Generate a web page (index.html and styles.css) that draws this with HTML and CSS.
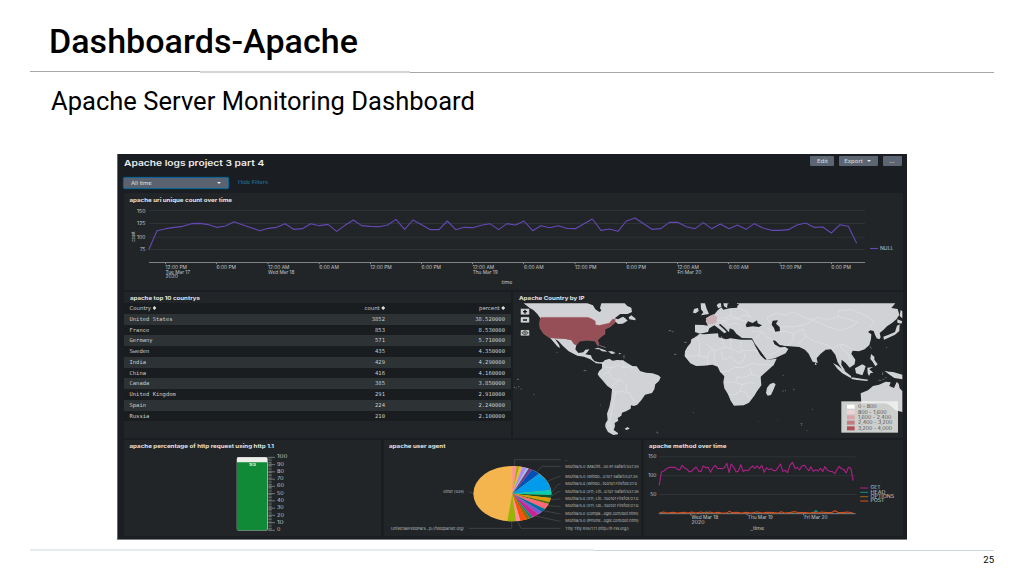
FILE: index.html
```html
<!DOCTYPE html>
<html lang="en">
<head>
<meta charset="utf-8">
<title>Dashboards-Apache</title>
<link rel="stylesheet" href="styles.css">
<script src="labels.js" defer></script>
</head>
<body>
<main class="slide">
<h1 class="slide-title">Dashboards-Apache</h1>
<div class="rule rule-top"><i></i><i></i><i></i></div>
<h2 class="slide-subtitle">Apache Server Monitoring Dashboard</h2>
<section class="dashboard">
<header class="topbar">
<h3 class="board-title">Apache logs project 3 part 4</h3>
<div class="actions">
<button class="btn btn-edit"><span>Edit</span></button>
<button class="btn btn-export"><span>Export</span><i class="caret"></i></button>
<button class="btn btn-more"><span>...</span></button>
</div>
</header>
<div class="filters">
<div class="select"><span>All time</span><i class="caret"></i></div>
<a class="hide">Hide Filters</a>
</div>

<article class="panel">
<svg class="chart" viewBox="124 193 779 97">
<text class="ttl" x="129.5" y="202" textLength="102.5">apache uri unique count over time</text>
<path class="grid" d="M149 210.5H865M149 223.5H865M149 237.2H865M149 249.5H865"/>
<path class="axis" d="M149 262.5H865M165.5 262v2.2M216.5 262v2.2M268 262v2.2M319.3 262v2.2M370.5 262v2.2M421.5 262v2.2M472.5 262v2.2M523.5 262v2.2M575 262v2.2M626.5 262v2.2M677.5 262v2.2M728.5 262v2.2M780 262v2.2M831.5 262v2.2"/>
<g class="lbl">
<text x="137" y="212.6" textLength="8.5">150</text><text x="137" y="225.3" textLength="8.5">125</text><text x="137" y="238.6" textLength="8.5">100</text><text x="140" y="251.4" textLength="5.5">75</text>
<text transform="translate(135 241.5) rotate(-90)" textLength="10">count</text>
<text x="165.5" y="268.9" textLength="21.5">12:00 PM</text><text x="165.5" y="273.6" textLength="24.5">Tue Mar 17</text><text x="165.5" y="278.2" textLength="12.5">2020</text>
<text x="216.5" y="268.9" textLength="19.5">6:00 PM</text>
<text x="268" y="268.9" textLength="21.5">12:00 AM</text><text x="268" y="273.6" textLength="26.5">Wed Mar 18</text>
<text x="319.3" y="268.9" textLength="19.5">6:00 AM</text><text x="370.3" y="268.9" textLength="21.5">12:00 PM</text><text x="421.5" y="268.9" textLength="19.5">6:00 PM</text>
<text x="472.7" y="268.9" textLength="21.5">12:00 AM</text><text x="472.7" y="273.6" textLength="25">Thu Mar 19</text>
<text x="524" y="268.9" textLength="19.5">6:00 AM</text><text x="575" y="268.9" textLength="21.5">12:00 PM</text><text x="626.4" y="268.9" textLength="19.5">6:00 PM</text>
<text x="677.5" y="268.9" textLength="21.5">12:00 AM</text><text x="677.5" y="273.6" textLength="24">Fri Mar 20</text>
<text x="729" y="268.9" textLength="19.5">6:00 AM</text><text x="780" y="268.9" textLength="21.5">12:00 PM</text><text x="831.3" y="268.9" textLength="19.5">6:00 PM</text>
<text x="501.5" y="284.3" textLength="11">time</text><text x="880" y="250.2" textLength="13.5">NULL</text>
</g>
<path class="count-line" d="M870 248.5H878"/>
<polyline class="count-line" transform="translate(110 150) scale(.33333)" points="116,299 141,242 167,236 193,232 218,229 244,221 270,220 296,224 320,232 346,228 372,215 397,224 423,233 449,242 475,235 500,232 525,221 551,238 577,236 602,221 628,227 654,223 680,244 705,226 730,210 755,227 781,229 807,230 833,225 858,208 884,238 909,210 935,224 961,239 987,239 1012,213 1037,239 1063,232 1088,233 1114,226 1140,221 1166,239 1191,221 1217,225 1242,213 1268,242 1293,227 1319,233 1345,227 1370,235 1396,236 1422,221 1447,207 1473,241 1498,237 1524,244 1549,213 1575,204 1602,222 1626,238 1652,236 1678,217 1703,217 1729,230 1755,236 1780,218 1805,236 1831,222 1857,236 1882,225 1908,238 1933,221 1959,234 1984,241 2010,241 2035,239 2061,225 2087,219 2112,232 2138,231 2164,249 2190,224 2215,229 2240,280"/>
</svg>
</article>

<div class="row row-mid">
<article class="panel table-panel">
<h4 class="panel-title"><span>apache top 10 countrys</span></h4>
<table class="countries">
<thead><tr><th>Country <i class="sort"></i></th><th>count <i class="sort"></i></th><th>percent <i class="sort"></i></th></tr></thead>
<tbody>
<tr><td>United States</td><td>3852</td><td>38.520000</td></tr>
<tr><td>France</td><td>853</td><td>8.530000</td></tr>
<tr><td>Germany</td><td>571</td><td>5.710000</td></tr>
<tr><td>Sweden</td><td>435</td><td>4.350000</td></tr>
<tr><td>India</td><td>429</td><td>4.290000</td></tr>
<tr><td>China</td><td>416</td><td>4.160000</td></tr>
<tr><td>Canada</td><td>385</td><td>3.850000</td></tr>
<tr><td>United Kingdom</td><td>291</td><td>2.910000</td></tr>
<tr><td>Spain</td><td>224</td><td>2.240000</td></tr>
<tr><td>Russia</td><td>210</td><td>2.100000</td></tr>
</tbody>
</table>
</article>
<article class="panel">
<svg class="chart" viewBox="513 292 390 146">
<text class="ttl" x="519" y="299.6" textLength="65.5">Apache Country by IP</text>
<g transform="translate(512 288) scale(.33333)">
<g class="land">
<path d="M35 46H226L243 52 250 64 262 72 268 68 264 60 268 46H338L346 54 358 59 360 72 347 78 325 78 308 91 318 94 333 86 340 91 347 98 332 107 318 108 311 101 292 107 266 118 250 112 228 92H86L76 78 64 66 53 60Z"/>
<path d="M350 88 358 82 371 92 370 97 352 94ZM114 149 158 152 166 154 178 156 186 168 193 171 190 184 199 195 214 193 220 185 232 184 226 193 220 199 237 202 240 211 248 220 262 223 273 222 271 227 252 226 235 214 216 206 196 203 170 190 152 173 139 159 129 153 141 170 144 180 137 176Z"/>
<path d="M246 183 258 179 280 187 286 191 270 190 262 184ZM288 190 301 190 311 196 299 198ZM320 195 329 197 321 199ZM338 422 347 417 353 422 343 426ZM322 78 328 73 340 73 338 78Z"/>
<path d="M270 226 278 217 292 212 302 218 315 216 333 217 346 225 362 235 374 235 384 249 402 254 421 256 439 262 446 268 441 279 430 289 427 304 420 315 399 320 389 335 376 350 366 354 357 352 356 362 342 370 330 374 328 383 317 390 319 398 308 405 309 415 305 426 318 435 318 439 304 441 288 432 280 417 280 408 287 395 285 377 292 357 297 333 300 304 286 294 274 280 262 266 257 259 261 250 270 241Z"/>
<path d="M518 205 519 190 526 177 536 165 538 154 552 146 562 138 577 139 618 136 620 148 642 154 656 151 687 155 720 155 729 171 743 195 757 211 762 216 794 212 785 231 766 248 746 266 748 292 734 311 728 322 711 344 695 352 666 353 656 338 648 319 637 301 634 283 637 265 624 251 617 236 601 230 575 233 552 234 535 226Z"/>
<path d="M549 110 574 111 588 113 581 99 594 86 608 78 617 67 628 58 634 65 653 61 676 59 675 46H1150L1138 60 1157 63 1162 80 1154 93 1140 105 1125 115 1114 126 1103 135 1106 148 1102 154 1094 151 1089 140 1085 129 1075 127 1068 132 1078 139 1077 153 1072 171 1058 184 1041 190 1022 188 1018 197 1030 215 1028 229 1013 239 1001 225 989 215 988 230 1000 249 991 245 977 223 970 200 957 184 941 185 926 197 914 211 917 225 902 221 890 197 879 185 862 177 824 174 802 173 783 157 788 168 805 178 820 177 829 183 821 196 789 211 764 216 749 195 728 166 720 151 690 150 673 137 664 125 653 121 651 133 638 119 624 107 621 111 635 123 644 132 637 136 622 123 607 112 592 121 588 132 564 137 549 132Z"/>
<path d="M566 46H579L584 62 591 78 567 82 574 73 567 64ZM546 63 558 60 560 69 551 76 543 74ZM620 46H627L628 57 619 61 614 52ZM634 46H650L645 60 636 55ZM765 299 774 288 785 284 791 289 784 306 777 321 767 323 762 315ZM911 223 914 230 908 230ZM1114 146 1130 140 1149 132 1155 113 1163 109 1162 129 1149 140 1128 150 1116 155ZM1156 94 1171 100 1168 107 1156 104ZM1166 66 1171 70 1171 91 1163 84ZM963 225 978 233 998 249 1018 265 1016 270 991 256 976 242ZM1019 268 1053 273 1069 275 1065 279 1036 276 1018 273ZM1029 241 1051 229 1061 235 1057 247 1051 262 1032 256ZM1066 239 1083 237 1072 244 1084 254 1076 255 1071 264 1067 256ZM1077 198 1087 206 1087 215 1097 229 1090 235 1082 221 1075 213ZM1117 248 1131 251 1143 252 1171 260 1171 274 1147 270 1134 261ZM1048 346 1046 316 1068 307 1083 294 1101 290 1121 281 1136 283 1132 294 1146 300 1154 282 1160 287 1163 301 1171 309 1171 372 1150 367 1137 354 1122 346Z"/>
</g>
<path class="usa" d="M86 88H228L239 92 250 99 251 110 262 112 292 105 302 93 310 94 309 104 294 117 279 124 279 138 264 149 257 157 261 168 258 175 249 159 224 157 202 160 194 171 186 168 178 156 166 154 158 152 124 151 112 149 95 137 84 121 82 107Z"/>
<path class="france" d="M581 91 592 84 604 79 615 87 614 103 601 109 587 109Z"/>
<path class="sea" d="M701 111 708 100 722 105 735 97 737 106 750 112 741 117 722 115 704 118ZM782 98 798 97 792 107 803 117 804 130 790 132 786 120 779 110ZM725 166 763 213 758 214 745 201 736 185ZM783 157 790 158 803 171 815 173 804 178 788 169ZM647 46 657 50 682 47 673 57 655 59 646 57Z"/>
<path class="borders" d="M272 222 282 238 302 238 319 231 333 239 357 235 374 238M302 238 289 251 273 263M289 251 304 274 325 276 344 293 343 311 353 315 366 342M298 301 311 313 306 332 300 370 292 405 301 430M325 276 306 288 301 300M333 217 333 239M361 235 359 246M311 313 331 309 343 316M551 146 563 163 562 204 521 204M579 166 608 188 638 178 628 145M638 178 656 182 656 151M656 182 687 195 687 155M687 188H738M562 204 586 208 594 188 608 188M586 208 586 232M608 193 606 222 622 235M628 190 634 217 656 207 676 226 693 222 701 195M624 251 648 250 667 238 693 239 721 226M721 226 748 230 785 231M637 283 671 283 675 266 695 269 719 259 713 239M671 283 691 290 710 284 730 286M691 290 684 309 668 320 648 319M684 309 702 313 712 334M719 259 746 266M657 61 657 83 638 91 622 89M657 83 679 91 693 81 720 88M614 96 637 99 651 110 668 105 687 113M624 107 642 96 665 91 701 99M676 59 704 70 712 87M720 130 747 130 760 143 783 157M729 151 749 133M773 202 797 190 820 177M765 120 790 132 819 130 844 137 842 158 826 173M773 106 765 88 794 75 821 82 840 71 881 90 902 96 880 109 852 116 804 117M902 96 920 88 943 97 978 86 1015 96 1037 103 1015 118 984 127 943 115 902 96M978 86 980 69 1018 65 1067 85 1087 102 1072 117M844 137 873 123 881 145 861 167M881 145 906 160 945 170 963 182M963 182 983 168 1005 174 1022 188M983 168 989 183 1005 193 1018 217"/>
<path class="specks" d="M15 274h6M5 298h4M11 300h3M18 296h4M26 303h3M64 319h3M215 248h8M265 351h2M433 432 439 436M470 128h7M479 131h5M516 163h8M486 199h7M544 374h2M812 262h3M811 309h4M819 308h3M843 305h4M866 407h5M869 410v3M884 428h2M900 364h2M739 401h1M797 397h1M1074 175 1078 182M262 172 281 179M305 193h4M336 201v10M133 193h3M1100 277h8M1112 274h5M1120 269h4M1124 180v-3M1112 253v8"/>
<g class="mapbtn"><rect x="25" y="61" width="28" height="20" rx="4"/><rect x="25" y="86" width="28" height="19" rx="4"/><rect x="25" y="125" width="28" height="19" rx="4"/></g>
<path class="mapicon" d="M33 71H45M39 65V77M33 96H45"/>
<ellipse class="ring" cx="39" cy="134.500" rx="8" ry="5.500"/><path class="ring" d="M28 134.500H50M39 127V142"/>
<g class="map-legend"><rect class="legend-bg" x="988" y="340" width="170" height="94"/>
<rect x="1005" y="350" width="23" height="12" fill="#fff"/><rect x="1005" y="366" width="23" height="12" fill="#f0d3d6"/><rect x="1005" y="382" width="23" height="12" fill="#d9a5a9"/><rect x="1005" y="398" width="23" height="12" fill="#c47c81"/><rect x="1005" y="415" width="23" height="12" fill="#b25057"/>
<text x="1038" y="361" textLength="56">0 - 800</text><text x="1038" y="377" textLength="86">800 - 1,600</text><text x="1038" y="393" textLength="100">1,600 - 2,400</text><text x="1038" y="409" textLength="103">2,400 - 3,200</text><text x="1038" y="425" textLength="102">3,200 - 4,000</text></g>
</g>
</svg>
</article>
</div>

<div class="row row-bottom">
<article class="panel">
<svg class="chart" viewBox="124 440 257 96">
<text class="ttl" x="129.500" y="448.300" textLength="144.500">apache percentage of http request using http 1.1</text>
<g transform="translate(115 436) scale(.33333)">
<rect x="365" y="63" width="94" height="221" rx="6" fill="#a2a6a7"/>
<rect x="366" y="64" width="90" height="28" rx="4" fill="#eceee9"/>
<path d="M366 79H456V278Q456 283 451 283H371Q366 283 366 278Z" fill="#118a37"/>
<path class="ticks" d="M460 64h20M460 86h20M460 107.500h20M460 129.500h20M460 151h20M460 173h20M460 194.500h20M460 216.500h20M460 238h20M460 260h20M460 283h20"/>
<path class="minor" d="M465 65V283"/>
<text class="gauge-value" x="402" y="91" textLength="21">93</text>
<g class="big"><text x="486" y="67" textLength="31">100</text><text x="486" y="89" textLength="21">90</text><text x="486" y="110" textLength="21">80</text><text x="486" y="132" textLength="20">70</text><text x="486" y="154" textLength="21">60</text><text x="486" y="176" textLength="20">50</text><text x="486" y="198" textLength="21">40</text><text x="486" y="220" textLength="20">30</text><text x="486" y="242" textLength="21">20</text><text x="486" y="263" textLength="20">10</text><text x="486" y="285" textLength="10">0</text></g>
</g>
</svg>
</article>
<article class="panel">
<svg class="chart" viewBox="384 440 257 96">
<text class="ttl" x="389" y="448.300" textLength="56.500">apache user agent</text>
<g transform="translate(380 436) scale(.33333)">
<path class="leader" d="M403 92V71H542M470 107 486 91H542M502 136 535 122H542M513 171 535 145H542M513 181 535 167H542M510 192 535 189H542M502 209 535 211H542M490 224 535 233H542M467 240 535 255H542M413 255 423 277H542M280 172 266 167M395 256V277H266"/>
<ellipse cx="397" cy="173" rx="117" ry="83" fill="#f4b54f"/>
<path fill="#ff929e" d="M397 173V90A117 83 0 0 1 410 90.500Z"/>
<path fill="#99b407" d="M397 173 410 90.500A117 83 0 0 1 418 91.500Z"/>
<path fill="#f4b54f" d="M397 173 418 91.500A117 83 0 0 1 427 93Z"/>
<path fill="#a98cf5" d="M397 173 427 93A117 83 0 0 1 440 96Z"/>
<path fill="#8cc8ff" d="M397 173 440 96A117 83 0 0 1 446 97.500Z"/>
<path fill="#74398e" d="M397 173 446 97.500A117 83 0 0 1 456 101.500Z"/>
<path fill="#0051b5" d="M397 173 456 101.500A117 83 0 0 1 477 113Z"/>
<path fill="#009ceb" d="M397 173 477 113A117 83 0 0 1 513 163Z"/>
<path fill="#00cdaf" d="M397 173 513 163A117 83 0 0 1 514 177Z"/>
<path fill="#07562f" d="M397 173 514 177A117 83 0 0 1 512 186Z"/>
<path fill="#dd9900" d="M397 173 512 186A117 83 0 0 1 508 198Z"/>
<path fill="#4d6b13" d="M397 173 508 198A117 83 0 0 1 505 204Z"/>
<path fill="#ff677b" d="M397 173 505 204A117 83 0 0 1 495 219Z"/>
<path fill="#006fa4" d="M397 173 495 219A117 83 0 0 1 485 228Z"/>
<path fill="#7556d9" d="M397 173 485 228A117 83 0 0 1 475 235Z"/>
<path fill="#cb2196" d="M397 173 475 235A117 83 0 0 1 458 243.500Z"/>
<path fill="#008c80" d="M397 173 458 243.500A117 83 0 0 1 450 247Z"/>
<path fill="#99650c" d="M397 173 450 247A117 83 0 0 1 439 250.500Z"/>
<path fill="#fb4f0b" d="M397 173 439 250.500A117 83 0 0 1 421 254.500Z"/>
<path fill="#ff929e" d="M397 173 421 254.500A117 83 0 0 1 408 255.500Z"/>
<path fill="#99b407" d="M397 173 408 255.500A117 83 0 0 1 382 255.500Z"/>
<g class="agent"><text x="556" y="75" textLength="5">..</text><text x="556" y="95" textLength="220">Mozilla/5.0 (Macint...50.91 Safari/537.36</text><text x="556" y="126" textLength="217">Mozilla/5.0 (Windo...0.107 Safari/537.36</text><text x="556" y="148" textLength="215">Mozilla/5.0 (Windo...100101 Firefox/27.0</text><text x="556" y="170" textLength="220">Mozilla/5.0 (X11; Lin...0.107 Safari/537.36</text><text x="556" y="192" textLength="219">Mozilla/5.0 (X11; Lin...100101 Firefox/27.0</text><text x="556" y="214" textLength="219">Mozilla/5.0 (X11; Ub...100101 Firefox/27.0</text><text x="556" y="236" textLength="219">Mozilla/5.0 (compa...ogle.com/bot.html)</text><text x="556" y="258" textLength="220">Mozilla/5.0 (iPhone...ogle.com/bot.html)</text><text x="556" y="281" textLength="191">Tiny Tiny RSS/1.11 (http://tt-rss.org/)</text><text x="190" y="171" textLength="62">other (536)</text><text x="33" y="281" textLength="219">UniversalFeedPars...p://feedparser.org/</text></g>
</g>
</svg>
</article>
<article class="panel">
<svg class="chart" viewBox="643.500 440 259 96">
<text class="ttl" x="648.500" y="448.300" textLength="77.500">apache method over time</text>
<path class="grid" d="M658.500 456.800H855M658.500 475.700H855M658.500 494.500H855"/>
<g transform="translate(640 436) scale(.33333)">
<path class="axis" d="M55 233H645M151 233v5M320 233v5M489 233v5"/>
<polyline class="series" stroke="#ad2088" points="56,148 63,108 70,105 78,98 86,94 104,94 112,101 118,101 125,88 133,97 140,100 146,107 152,107 160,99 167,93 175,106 182,106 188,90 196,95 203,94 210,109 217,96 224,88 231,97 246,98 253,94 259,82 266,110 272,84 280,94 287,108 294,105 301,86 308,107 315,102 323,104 329,96 337,90 342,97 350,90 357,98 364,88 371,109 378,95 385,101 392,98 399,104 406,104 420,84 427,106 434,103 441,110 448,88 456,79 464,98 470,94 477,102 484,90 492,88 498,96 505,104 511,92 518,106 526,101 533,105 540,97 547,107 553,92 561,103 568,106 576,107 583,113 590,100 596,91 604,99 610,100 617,111 624,94 631,97 638,134"/>
<path class="series" stroke="#13877f" d="M190 231 197 228 204 231M519 231 526 223 534 230"/>
<polyline class="series" stroke="#d64d16" points="56,231 69,228 80,231 98,229 111,231 130,229 143,231 153,228 166,231 181,228 193,231 208,228 220,231 232,229 244,231 259,231 266,226 275,230 288,229 304,231 317,229 331,231 350,228 366,231 380,229 397,230 414,231 422,227 433,231 451,229 463,227 477,230 494,230 508,231 519,229 532,231 543,228 557,230 573,230 583,224 592,229 607,230 621,228 638,231"/>
<g class="big"><text x="23" y="67" textLength="25">150</text><text x="23" y="123" textLength="25">100</text><text x="29" y="179" textLength="19">50</text><text x="153" y="249" textLength="80">Wed Mar 18</text><text x="153" y="263" textLength="39">2020</text><text x="322" y="249" textLength="75">Thu Mar 19</text><text x="491" y="249" textLength="70">Fri Mar 20</text><text x="330" y="282" textLength="41">_time</text><text x="690" y="160" textLength="30">GET</text><text x="690" y="173" textLength="45">HEAD</text><text x="690" y="186" textLength="71">OPTIONS</text><text x="690" y="199" textLength="42">POST</text></g>
<path class="series" stroke="#ad2088" d="M659 156h24"/><path class="series" stroke="#13877f" d="M659 169h24"/><path class="series" stroke="#996215" d="M659 182h24"/><path class="series" stroke="#d64d16" d="M659 195h24"/>
</g>
</svg>
</article>
</div>
</section>
<div class="rule rule-bottom"><i></i><i></i></div>
<footer class="page-no">25</footer>
</main>
</body>
</html>
```
FILE: labels.js
```js
// Stretch the glyphs of every sized chart label, not only the gaps between them.
document.querySelectorAll('text[textLength]').forEach(function (label) {
  label.setAttribute('lengthAdjust', 'spacingAndGlyphs');
});
```
FILE: styles.css
```css
* { box-sizing: border-box; }
body { margin: 0; background: #fff; overflow: hidden; }
.slide { width: 1024px; height: 576px; display: flex; flex-direction: column; font-family: Roboto, sans-serif; color: #000; }
.slide-title { margin: 21px 0 0 49px; height: 50px; font-size: 34px; line-height: 41px; font-weight: 500; letter-spacing: .05px; white-space: nowrap; }
.rule { display: grid; height: 2px; margin-left: 30px; width: 964px; flex: none; }
.rule-top { grid-template-columns: 170px 210px 1fr; }
.rule-top i { border-top: 1px solid #a8a8a8; }
.rule-top i:nth-child(2) { border-top: 2px solid #d4d4d4; }
.rule-top i:nth-child(3) { margin-top: 1px; }
.slide-subtitle { margin: 13px 0 0 51px; height: 68px; font-size: 25.5px; line-height: 31px; font-weight: 400; letter-spacing: .03px; white-space: nowrap; }

.dashboard { width: 790px; height: 386px; margin-left: 117px; padding-left: 7px; padding-right: 4px; flex: none; display: flex; flex-direction: column; background: #1a1e22; border-bottom: 1px solid #7d8083; box-shadow: inset 1px 0 #64686b; font-family: Inter, sans-serif; color: #dfe1e2; overflow: hidden; }
.topbar { height: 20px; display: flex; justify-content: space-between; align-items: flex-start; flex: none; }
.board-title { margin: 2.5px 0 0; font-size: 8.2px; line-height: 12px; font-weight: 600; white-space: nowrap; transform: scaleX(1.25); transform-origin: left; color: #ebecec; }
.actions { display: flex; gap: 5px; padding: 2px 1px 0 0; }
.btn { height: 10px; padding: 0; border: 0; border-radius: 1px; background: #5c6673; color: #cfd4d9; font: 500 4.8px/10px Inter, sans-serif; display: flex; align-items: center; justify-content: center; gap: 6px; }
.btn span { display: inline-block; transform: scaleX(1.25); }
.btn-edit { width: 24px; }
.btn-export { width: 39px; }
.btn-more { width: 19px; }
.caret { width: 0; height: 0; border: 2px solid transparent; border-top: 2.6px solid #e4e7e9; border-bottom: 0; }
.filters { height: 19px; padding-top: 3px; display: flex; align-items: flex-start; flex: none; }
.select { width: 106px; height: 12px; margin-left: -1px; padding: 0 7px 0 7px; border: 1.5px solid #0a6395; border-radius: 2px; box-shadow: 0 0 1px #087bb9; background: #59626e; display: flex; align-items: center; justify-content: space-between; font-size: 4.8px; line-height: 9px; }
.select span, .hide { transform: scaleX(1.24); transform-origin: left; }
.hide { margin-left: 9px; font-size: 4.5px; line-height: 12px; color: #207fae; }

.panel { background: #212527; min-width: 0; overflow: hidden; flex: none; }
.chart { display: block; width: 100%; height: 100%; }
.dashboard > .panel { height: 97px; }
.row { display: grid; flex: none; }
.row-mid { grid-template-columns: 387px 390px; column-gap: 2px; height: 146px; margin-top: 2px; }
.row-bottom { grid-template-columns: 257px 257px 259px; column-gap: 3px; height: 96px; margin-top: 2px; }

text { font-family: Inter, sans-serif; }
.ttl { font: 700 5.1px Inter, sans-serif; fill: #e2e4e4; }
.lbl text { font-size: 4.6px; fill: #c4c7c8; }
.big text { font-size: 13px; fill: #c8cbcc; }
.agent text { font-size: 11.5px; fill: #b9bcbd; }
.grid { stroke: #2e3336; stroke-width: 1; fill: none; }
.axis { stroke: #7f8587; stroke-width: 1; vector-effect: non-scaling-stroke; fill: none; }
.count-line, .series { fill: none; stroke-width: 1.1; vector-effect: non-scaling-stroke; stroke-linejoin: round; }
.count-line { stroke: #6548b5; }

.panel-title { margin: 0; height: 11px; padding-left: 5.5px; font-size: 5.1px; line-height: 12px; font-weight: 700; color: #e2e4e4; }
.panel-title span { display: inline-block; transform: scaleX(1.2); transform-origin: left; }
.countries { width: 387px; border-collapse: collapse; table-layout: fixed; font: 5.5px/10.7px "DejaVu Sans Mono", monospace; color: #c9cccd; }
.countries th, .countries td { padding: 0 6px 0 5.5px; height: 10.75px; font-weight: 400; text-align: right; white-space: nowrap; }
.countries th { font-family: "DejaVu Sans", sans-serif; font-size: 5.4px; }
.countries th:first-child, .countries td:first-child { width: 146px; text-align: left; }
.countries th:nth-child(2), .countries td:nth-child(2) { width: 121px; }
.countries tr { background: #191d20; }
.countries tbody tr:nth-child(odd) { background: #2d3234; }
.sort { display: inline-block; width: 3.6px; height: 4px; background: linear-gradient(#d9dcdc 0 40%, transparent 40% 55%, #d9dcdc 55%); clip-path: polygon(50% 0, 100% 45%, 100% 55%, 50% 100%, 0 55%, 0 45%); }

.land path { fill: #d1d2d5; }
.usa { fill: #974f57; stroke: #b87980; stroke-width: 1; }
.france { fill: #c8b0b4; }
.sea { fill: #212527; }
.borders { fill: none; stroke: #e6e6e8; stroke-width: 1.5; }
.specks { fill: none; stroke: #8f9396; stroke-width: 2; }
.mapbtn rect { fill: #cdd0d0; stroke: #111416; stroke-width: 2; }
.mapicon { fill: none; stroke: #15191b; stroke-width: 4; }
.ring { fill: none; stroke: #3a3e40; stroke-width: 2; }
.legend-bg { fill: #f0f2ef; opacity: .83; }
.map-legend text { font-size: 13px; fill: #4e5152; }
.ticks { stroke: #9a9e9f; stroke-width: 2; }
.minor { stroke: #777c7e; stroke-width: 10; stroke-dasharray: 2 2.4; }
.gauge-value { font-size: 12px; font-weight: 700; fill: #d8f4df; }
.leader { fill: none; stroke: #4b5052; stroke-width: 2; }
.rule-bottom { grid-template-columns: 564px 1fr; margin-top: 9px; }
.rule-bottom i { border-top: 2px solid #e7ecef; }
.rule-bottom i:last-child { margin-top: 1px; border-top: 1px solid #cfd8dc; }
.page-no { margin: 3px 30px 0 auto; font-size: 9.5px; line-height: 12px; }
```
